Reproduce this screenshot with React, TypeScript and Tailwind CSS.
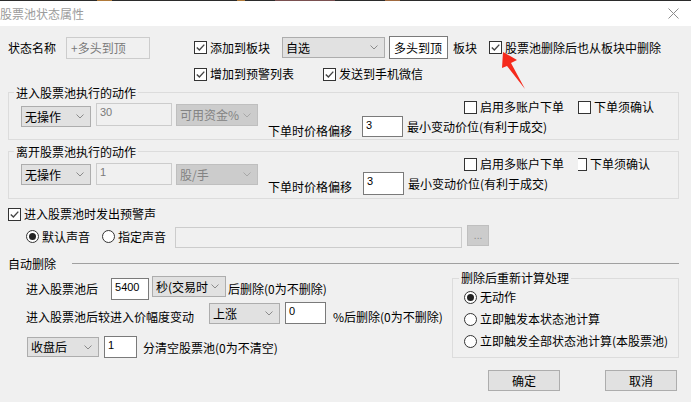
import React from "react";

const CJK = "font-['Noto_Sans_CJK_SC','Microsoft_YaHei',sans-serif]";

function Check({ label, checked = true, clipped = false, className = "" }: { label: string; checked?: boolean; clipped?: boolean; className?: string }) {
  return (
    <div className={`flex items-center ${className}`}>
      {clipped ? (
        <span className="w-[9px] h-[13px] border-t border-r border-b border-[#333333] bg-white shrink-0" />
      ) : (
        <span className="w-[13px] h-[13px] border border-[#333333] bg-white flex items-center justify-center shrink-0">
          {checked && (
            <svg width="11" height="11" viewBox="0 0 11 11">
              <path d="M1.8 5.4 L4.4 8 L9.3 2.6" fill="none" stroke="#454545" strokeWidth="1.4" />
            </svg>
          )}
        </span>
      )}
      <span className="ml-[3px] leading-[16px] whitespace-nowrap">{label}</span>
    </div>
  );
}

function Radio({ label, on = false, className = "" }: { label: string; on?: boolean; className?: string }) {
  return (
    <div className={`flex items-center ${className}`}>
      <span className="w-[13px] h-[13px] rounded-full border border-[#333333] bg-white flex items-center justify-center shrink-0">
        {on && <span className="w-[7px] h-[7px] rounded-full bg-[#222222]" />}
      </span>
      <span className="ml-[3px] leading-[16px] whitespace-nowrap">{label}</span>
    </div>
  );
}

function Select({ label, disabled = false, className = "" }: { label: string; disabled?: boolean; className?: string }) {
  const tone = disabled
    ? "bg-[#cccccc] border-[#bfbfbf] text-[#838383]"
    : "bg-[#e1e1e1] border-[#adadad] text-black";
  return (
    <div className={`flex items-center justify-between border pl-[3px] pr-[6px] shrink-0 ${tone} ${className}`}>
      <span className="whitespace-nowrap leading-[16px]">{label}</span>
      <svg width="8" height="5" viewBox="0 0 8 5" className="shrink-0">
        <path d="M0.5 0.5 L4 4 L7.5 0.5" fill="none" stroke={disabled ? "#a8a8a8" : "#8a8a8a"} strokeWidth="1" />
      </svg>
    </div>
  );
}

function Field({ value, disabled = false, cjk = false, className = "" }: { value: string; disabled?: boolean; cjk?: boolean; className?: string }) {
  const tone = disabled
    ? "bg-[#f0f0f0] border-[#cccccc] text-[#7a7a7a]"
    : "bg-white border-[#7a7a7a] text-black";
  const text = cjk
    ? "flex items-center pl-[4px] text-[12px]"
    : "pl-[3px] pt-[2px] text-[11px] leading-[12px] font-['Liberation_Sans',sans-serif]";
  return <div className={`border shrink-0 ${tone} ${text} ${className}`}>{value}</div>;
}

function Button({ label }: { label: string }) {
  return (
    <div className="w-[72px] h-[21px] bg-[#e1e1e1] border border-[#adadad] flex items-center justify-center leading-[16px]">
      {label}
    </div>
  );
}

export default function App() {
  return (
    <div className={`relative w-[691px] h-[402px] overflow-hidden bg-[#f0f0f0] text-black text-[12px] leading-[16px] ${CJK}`}>
      {/* top edge */}
      <div className="h-px flex bg-[#2b2b2b]">
        <span className="ml-[97px] w-[15px] bg-[#b07a3a]" />
        <span className="ml-[125px] w-[8px] bg-[#b07a3a]" />
        <span className="ml-[30px] w-[60px] bg-[#7a5050]" />
        <span className="ml-[50px] w-[15px] bg-[#a06a40]" />
      </div>

      {/* title bar */}
      <div className="h-[25px] bg-white flex items-center justify-between">
        <span className="text-[#9c9c9c] leading-[16px]">股票池状态属性</span>
        <svg width="11" height="11" viewBox="0 0 11 11" className="mr-[12px]">
          <path d="M0.5 0.5 L10.5 10.5 M10.5 0.5 L0.5 10.5" stroke="#8c8c8c" strokeWidth="1" />
        </svg>
      </div>

      {/* row 1 */}
      <div className="mt-[10px] h-[23px] flex items-center">
        <span className="ml-[8px] w-[48px] whitespace-nowrap">状态名称</span>
        <Field className="ml-[10px] w-[84px] h-[22px]" disabled cjk value="+多头到顶" />
        <Check className="ml-[44px]" label="添加到板块" />
        <Select className="ml-[12px] w-[103px] h-[21px]" label="自选" />
        <Field className="ml-[4px] w-[59px] h-[23px]" cjk value="多头到顶" />
        <span className="ml-[5px] whitespace-nowrap">板块</span>
        <Check className="ml-[12px]" label="股票池删除后也从板块中删除" />
      </div>

      {/* row 2 */}
      <div className="mt-[7px] h-[16px] flex items-center">
        <Check className="ml-[194px]" label="增加到预警列表" />
        <Check className="ml-[29px]" label="发送到手机微信" />
      </div>

      {/* group: enter */}
      <div className="relative mt-[10px] ml-[8px] w-[671px] h-[48px] border border-[#dcdcdc]">
        <span className="absolute left-[5px] top-[-8px] px-[2px] bg-[#f0f0f0] whitespace-nowrap">进入股票池执行的动作</span>
        <div className="flex items-start">
          <Select className="ml-[12px] mt-[13px] w-[70px] h-[21px]" label="无操作" />
          <Field className="ml-[5px] mt-[10px] w-[76px] h-[23px]" disabled value="30" />
          <Select className="ml-[4px] mt-[11px] w-[82px] h-[22px]" disabled label="可用资金%" />
          <div className="ml-[10px] flex flex-col">
            <div className="mt-[7px] h-[14px] pl-[196px] flex items-center">
              <Check checked={false} label="启用多账户下单" />
              <Check className="ml-[14px]" checked={false} label="下单须确认" />
            </div>
            <div className="mt-[2px] h-[21px] flex items-start">
              <span className="mt-[7px] whitespace-nowrap">下单时价格偏移</span>
              <Field className="ml-[10px] w-[41px] h-[21px]" value="3" />
              <span className="ml-[4px] mt-[3px] whitespace-nowrap">最小变动价位(有利于成交)</span>
            </div>
          </div>
        </div>
      </div>

      {/* group: leave */}
      <div className="relative mt-[11px] ml-[8px] w-[671px] h-[48px] border border-[#dcdcdc]">
        <span className="absolute left-[5px] top-[-8px] px-[2px] bg-[#f0f0f0] whitespace-nowrap">离开股票池执行的动作</span>
        <div className="flex items-start">
          <Select className="ml-[12px] mt-[12px] w-[70px] h-[21px]" label="无操作" />
          <Field className="ml-[5px] mt-[11px] w-[76px] h-[22px]" disabled value="1" />
          <Select className="ml-[4px] mt-[12px] w-[82px] h-[21px]" disabled label="股/手" />
          <div className="ml-[10px] flex flex-col">
            <div className="mt-[5px] h-[14px] pl-[196px] flex items-center">
              <Check checked={false} label="启用多账户下单" />
              <Check className="ml-[14px]" checked={false} clipped label="下单须确认" />
            </div>
            <div className="mt-[1px] h-[23px] flex items-start">
              <span className="mt-[7px] whitespace-nowrap">下单时价格偏移</span>
              <Field className="ml-[11px] w-[41px] h-[23px]" value="3" />
              <span className="ml-[4px] mt-[4px] whitespace-nowrap">最小变动价位(有利于成交)</span>
            </div>
          </div>
        </div>
      </div>

      {/* alarm sound */}
      <div className="mt-[7px] h-[16px] flex items-center">
        <Check className="ml-[8px]" label="进入股票池时发出预警声" />
      </div>
      <div className="mt-[3px] h-[23px] flex items-center">
        <Radio className="ml-[26px]" on label="默认声音" />
        <Radio className="ml-[12px]" label="指定声音" />
        <div className="ml-[9px] w-[287px] h-[21px] self-end bg-[#f0f0f0] border border-[#cccccc]" />
        <div className="ml-[5px] w-[22px] h-[21px] self-start bg-[#cccccc] border border-[#bfbfbf] flex items-center justify-center text-[#8a8a8a] text-[10px] leading-none font-['Liberation_Sans',sans-serif]">
          ...
        </div>
      </div>

      {/* auto delete */}
      <div className="mt-[8px] h-[16px] flex items-start">
        <span className="ml-[8px] whitespace-nowrap">自动删除</span>
        <div className="flex-1 ml-[16px] mr-[12px] mt-[7px] h-px bg-[#a0a0a0]" />
      </div>

      <div className="mt-[4px] flex items-start">
        <div className="flex-1 flex flex-col">
          <div className="h-[24px] flex items-start">
            <span className="ml-[26px] mt-[5px] whitespace-nowrap">进入股票池后</span>
            <Field className="ml-[13px] mt-[2px] w-[38px] h-[22px]" value="5400" />
            <Select className="ml-[3px] w-[74px] h-[21px]" label="秒(交易时" />
            <span className="ml-[2px] mt-[5px] whitespace-nowrap">后删除(0为不删除)</span>
          </div>
          <div className="mt-[2px] h-[23px] flex items-start">
            <span className="ml-[26px] mt-[7px] whitespace-nowrap">进入股票池后较进入价幅度变动</span>
            <Select className="ml-[15px] mt-[1px] w-[71px] h-[21px]" label="上涨" />
            <Field className="ml-[5px] w-[41px] h-[22px]" value="0" />
            <span className="ml-[7px] mt-[7px] whitespace-nowrap">%后删除(0为不删除)</span>
          </div>
          <div className="mt-[11px] h-[22px] flex items-start">
            <Select className="ml-[27px] mt-[1px] w-[72px] h-[20px]" label="收盘后" />
            <Field className="ml-[5px] w-[33px] h-[22px]" value="1" />
            <span className="ml-[6px] mt-[4px] whitespace-nowrap">分清空股票池(0为不清空)</span>
          </div>
        </div>

        <div className="relative mt-[2px] mr-[12px] w-[227px] h-[80px] border border-[#dcdcdc] shrink-0">
          <span className="absolute left-[6px] top-[-9px] px-[2px] bg-[#f0f0f0] whitespace-nowrap">删除后重新计算处理</span>
          <div className="mt-[7px] pl-[11px] flex flex-col">
            <div className="h-[22px] flex items-center"><Radio on label="无动作" /></div>
            <div className="h-[22px] flex items-center"><Radio label="立即触发本状态池计算" /></div>
            <div className="h-[22px] flex items-center"><Radio label="立即触发全部状态池计算(本股票池)" /></div>
          </div>
        </div>
      </div>

      {/* buttons */}
      <div className="mt-[12px] pr-[14px] flex justify-end gap-[45px]">
        <Button label="确定" />
        <Button label="取消" />
      </div>

      {/* red annotation arrow */}
      <svg className="absolute left-[498px] top-[48px]" width="32" height="44" viewBox="0 0 32 44">
        <polygon points="5,4 19,12 13,15 27,41 9,18 4,20" fill="#f52a1c" />
      </svg>
    </div>
  );
}
